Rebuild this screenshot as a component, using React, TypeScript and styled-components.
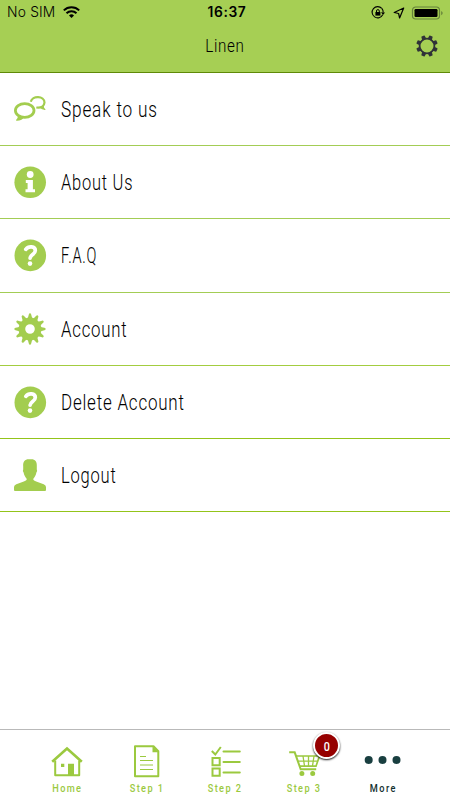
import React from "react";
import styled, { createGlobalStyle } from "styled-components";

const GREEN = "#a3cd4f";

const GlobalStyle = createGlobalStyle`
  * { box-sizing: border-box; }
  body { margin: 0; background: #fff; overflow: hidden; }
`;

const Screen = styled.div`
  width: 450px;
  height: 800px;
  display: flex;
  flex-direction: column;
  background: #fff;
  color: #000;
  font-family: Roboto, "Liberation Sans", sans-serif;
`;

const Header = styled.header`
  height: 73px;
  flex: none;
  background: #a6cf54;
  border-bottom: 1px solid #5f8a08;
`;

const StatusBar = styled.div`
  height: 25px;
  display: grid;
  grid-template-columns: 1fr auto 1fr;
  align-items: center;
  padding: 0 6px 0 7px;
  font-family: Inter, sans-serif;
  font-size: 13.8px;
  line-height: 25px;
`;

const StatusSide = styled.div<{ $end?: boolean }>`
  display: flex;
  align-items: center;
  justify-content: ${(p) => (p.$end ? "flex-end" : "flex-start")};
  gap: 7px;
  font-weight: 300;
  letter-spacing: 0.2px;
`;

const Clock = styled.span`
  font-weight: 600;
  letter-spacing: 0.6px;
  margin-left: 3px;
`;

const TitleBar = styled.div`
  height: 42px;
  display: grid;
  grid-template-columns: 1fr auto 1fr;
  align-items: center;
  padding-right: 12px;
  padding-left: 12px;
`;

const Title = styled.h1`
  grid-column: 2;
  margin: 0;
  font-size: 18.5px;
  font-weight: 300;
  line-height: 40px;
  letter-spacing: 0.8px;
  transform: scaleX(0.82);
`;

const SettingsButton = styled.span`
  justify-self: end;
  display: flex;
`;

const Menu = styled.nav`
  flex: 1;
`;

const MenuRow = styled.div<{ $line: string }>`
  height: 73.2px;
  display: flex;
  align-items: center;
  gap: 13.5px;
  padding-left: 13px;
  border-bottom: 1px solid ${(p) => p.$line};
`;

const RowLabel = styled.span<{ $scale: number }>`
  padding-top: 2px;
  font-size: 21.5px;
  font-weight: 300;
  letter-spacing: 1px;
  line-height: 30px;
  white-space: nowrap;
  transform-origin: left center;
  transform: scaleX(${(p) => p.$scale});
`;

const TabBar = styled.footer`
  height: 71px;
  flex: none;
  display: grid;
  grid-template-columns: repeat(5, 78.8px);
  justify-content: center;
  border-top: 1px solid #b9b9b9;
`;

const Tab = styled.div<{ $active?: boolean }>`
  position: relative;
  display: flex;
  flex-direction: column;
  align-items: center;
  padding-top: 14px;
  color: ${(p) => (p.$active ? "#12302f" : "#9bc93f")};
`;

const TabLabel = styled.span`
  margin-top: 2px;
  padding-left: 1px;
  font-size: 11.2px;
  font-weight: 500;
  line-height: 16px;
  letter-spacing: 1.7px;
  white-space: nowrap;
  transform: scaleX(0.82);
`;

const Badge = styled.span`
  position: absolute;
  left: 49px;
  top: 2px;
  width: 27px;
  height: 27px;
  display: flex;
  align-items: center;
  justify-content: center;
  border: 2.5px solid #fff;
  border-radius: 50%;
  background: #960000;
  box-shadow: 0 1px 2px rgba(0, 0, 0, 0.9);
  color: #fff;
  font-size: 13.5px;
  font-weight: 500;
`;

const BadgeCount = styled.span`
  transform: scaleX(0.8);
`;

const WifiIcon = () => (
  <svg width="17" height="13" viewBox="0 0 17 13" fill="none" stroke="#000" strokeWidth="2">
    <path d="M.8 4.4a11 11 0 0 1 15.4 0M3.5 7.2a7.1 7.1 0 0 1 10 0" />
    <path d="M8.5 12 6 9.5a3.6 3.6 0 0 1 5 0z" fill="#000" stroke="none" />
  </svg>
);

const StatusIcons = () => (
  <svg width="73" height="16" viewBox="0 0 73 16" fill="none" stroke="#000">
    <path d="M10.8 3.4a5.6 5.6 0 1 0 .9 6.4" strokeWidth="1.1" />
    <path d="M10.8 3.4a5.6 5.6 0 0 1 1.4 4" strokeWidth="1.1" />
    <path d="m10 7.3 4 .1-2 2.5z" fill="#000" stroke="none" />
    <path d="M4.4 7h5v3.6h-5z" fill="#000" stroke="none" />
    <path d="M5.5 7.2V6a1.4 1.4 0 0 1 2.8 0v1.2" />
    <path d="m32.7 3-9.5 4.5 4.4 1 1 4.5z" strokeWidth="1.2" strokeLinejoin="round" />
    <rect x="41.5" y="2" width="27" height="12" rx="3.2" stroke="#65823a" strokeWidth="1.2" />
    <rect x="43.5" y="4" width="23" height="8" rx="1.2" fill="#000" stroke="none" />
    <path d="M70.2 6v4.2c2-.8 2-3.4 0-4.2z" fill="#65823a" stroke="none" />
  </svg>
);

const SettingsIcon = () => (
  <svg width="22" height="22" viewBox="-11 -11 22 22" fill="#303238">
    {[22.5, 67.5, 112.5, 157.5, 202.5, 247.5, 292.5, 337.5].map((a) => (
      <path key={a} transform={`rotate(${a})`} d="M-2.2-7.2-1.8-10.4q.1-.4.5-.4h2.6q.4 0 .5.4l.4 3.2z" />
    ))}
    <circle r="7.4" fill="none" stroke="#303238" strokeWidth="1.8" />
  </svg>
);

const MenuSvg = styled.svg`
  width: 34px;
  height: 34px;
  flex: none;
  fill: ${GREEN};
`;

const ChatIcon = () => (
  <MenuSvg viewBox="0 0 34 34">
    <g fill="none" stroke={GREEN} strokeLinejoin="round">
      <ellipse cx="11.700" cy="18.500" rx="9.300" ry="6.800" strokeWidth="2.800" />
      <path fill={GREEN} stroke="none" d="M4.300 22.500c1 1.800.7 3.500-.9 5-.6.700-.3 1.400.7 1.300 2.900-.3 5.200-1.300 6.800-3.400z" />
      <path strokeWidth="2.200" d="M17.800 9.800C19 3.300 31.500 3.400 31.500 10.600c0 1.900-.9 3.200-2.400 4.200q-2.200 1.200-5.800.7" />
      <path fill={GREEN} stroke="none" d="M30.900 13.500c-.2 1.500.2 2.500 1.300 3.400.5.500.3 1-.5 1-2-.1-3.500-.9-4.700-2.300z" />
    </g>
  </MenuSvg>
);

const InfoIcon = () => (
  <MenuSvg viewBox="0 0 34 34">
    <circle cx="17.2" cy="17.3" r="15.8" />
    <circle cx="17.2" cy="9.500" r="3.4" fill="#fff" />
    <path fill="#fff" d="M12.8 14.9h7.100v9.400H22v2.900h-9.500v-2.900h2.100v-6.400h-1.800z" />
  </MenuSvg>
);

const HelpIcon = () => (
  <MenuSvg viewBox="0 0 34 34">
    <circle cx="17.3" cy="17.400" r="15.8" />
    <path d="M12.8 11.300c2.800-3.7 9.500-3.3 9.500 1.300 0 4-4.900 3.900-5.200 7.600" fill="none" stroke="#fff" strokeWidth="3.700" strokeLinecap="round" />
    <circle cx="17" cy="25.600" r="2.300" fill="#fff" />
  </MenuSvg>
);

const CogIcon = () => (
  <MenuSvg viewBox="-17 -17 34 34">
    {Array.from({ length: 12 }, (_, i) => (
      <path key={i} transform={`rotate(${i * 30})`} d="M-3.1-10.400Q-1.700-11-1.200-14.500-.9-15.700 0-15.700q.9 0 1.200 1.200.5 3.500 1.900 4.100L2.500-8h-5z" />
    ))}
    <circle r="7.900" fill="none" stroke={GREEN} strokeWidth="6.200" />
  </MenuSvg>
);

const PersonIcon = () => (
  <MenuSvg viewBox="0 0 34 34">
    <path d="M10.200 8.500C9.800 3.300 12 1.300 15.500 1.300h3c3.500 0 5.700 2 5.300 7.200v2.900q.9 1.500-.4 3.200c-.6 2.800-1.600 4.500-3.200 6.300.3 1.400 1.300 1.800 3 2.500l7.500 2.900Q33 27.200 33 29v3q0 1-1 1H2q-1 0-1-1v-3q0-1.800 2.300-2.700l7.500-2.900c1.700-.7 2.700-1.100 3-2.500-1.600-1.800-2.600-3.500-3.200-6.300q-1.300-1.700-.4-3.200z" />
  </MenuSvg>
);

const TabSvg = styled.svg`
  width: 34px;
  height: 35px;
  flex: none;
  fill: none;
  stroke: currentColor;
  stroke-width: 2;
`;

const HomeIcon = () => (
  <TabSvg viewBox="0 0 34 35">
    <path d="m2.200 17.700 14.800-13.200 14.800 13.200" strokeWidth="2.600" />
    <path d="M5.200 16.500v14.800h24V16.500" strokeLinejoin="round" />
    <path d="M11 19.800h3.300v3.200H11zM18 19.800h6v11.500h-6z" fill="currentColor" stroke="none" />
  </TabSvg>
);

const PageIcon = () => (
  <TabSvg viewBox="0 0 34 35">
    <path d="M6 2.200h18.500l4.800 5v25H6z" strokeLinejoin="round" />
    <path d="M23.500 2v6.200h6z" fill="currentColor" stroke="none" />
    <path d="M11 12.500h6M11 16.500h13M11 21h13M11 25.500h13" strokeWidth="1" />
  </TabSvg>
);

const ChecklistIcon = () => (
  <TabSvg viewBox="0 0 34 35">
    <path d="m3.800 7 3.500 3.500L12.800 3M4.500 14h7.200v7.200H4.500zM4.500 24.500h7.200v7.200H4.500z" />
    <path d="M15.500 7.500h16.300M15.500 18h16.300M15.500 28.500h16.300" strokeLinecap="round" />
  </TabSvg>
);

const CartIcon = () => (
  <TabSvg viewBox="0 0 34 35">
    <path d="M2.200 8.300h5.500l6 17h15.500" strokeWidth="2" />
    <path d="M9 12h23.500l-3.500 10.200H12.500" strokeWidth="1.700" />
    <path d="M10.800 17.200h20M16 12l1.500 10M21.500 12v10M27 12l-1.500 10" strokeWidth="1.300" />
    <path d="M17.400 29.600a2.500 2.500 0 1 1-5 0 2.500 2.500 0 0 1 5 0zM28.200 29.600a2.500 2.500 0 1 1-5 0 2.500 2.500 0 0 1 5 0z" fill="currentColor" stroke="none" />
  </TabSvg>
);

const DotsIcon = styled.svg`
  width: 38px;
  height: 35px;
  fill: #193f40;
`;

const ROWS = [
  { label: "Speak to us", Icon: ChatIcon, scale: 0.802, line: "#a3cd55" },
  { label: "About Us", Icon: InfoIcon, scale: 0.765, line: "#a3cd55" },
  { label: "F.A.Q", Icon: HelpIcon, scale: 0.68, line: "#a3cd55" },
  { label: "Account", Icon: CogIcon, scale: 0.78, line: "#a3cd40" },
  { label: "Delete Account", Icon: HelpIcon, scale: 0.79, line: "#93c41a" },
  { label: "Logout", Icon: PersonIcon, scale: 0.77, line: "#93c41a" },
];

export default function App() {
  return (
    <Screen>
      <GlobalStyle />
      <Header>
        <StatusBar>
          <StatusSide>No SIM <WifiIcon /></StatusSide>
          <Clock>16:37</Clock>
          <StatusSide $end><StatusIcons /></StatusSide>
        </StatusBar>
        <TitleBar>
          <Title>Linen</Title>
          <SettingsButton><SettingsIcon /></SettingsButton>
        </TitleBar>
      </Header>
      <Menu>
        {ROWS.map(({ label, Icon, scale, line }) => (
          <MenuRow key={label} $line={line}>
            <Icon />
            <RowLabel $scale={scale}>{label}</RowLabel>
          </MenuRow>
        ))}
      </Menu>
      <TabBar>
        <Tab><HomeIcon /><TabLabel>Home</TabLabel></Tab>
        <Tab><PageIcon /><TabLabel>Step 1</TabLabel></Tab>
        <Tab><ChecklistIcon /><TabLabel>Step 2</TabLabel></Tab>
        <Tab><CartIcon /><TabLabel>Step 3</TabLabel><Badge><BadgeCount>0</BadgeCount></Badge></Tab>
        <Tab $active>
          <DotsIcon viewBox="0 0 38 35">
            <circle cx="4.700" cy="16" r="4" />
            <circle cx="18.500" cy="16" r="4" />
            <circle cx="32.500" cy="16" r="4" />
          </DotsIcon>
          <TabLabel>More</TabLabel>
        </Tab>
      </TabBar>
    </Screen>
  );
}
